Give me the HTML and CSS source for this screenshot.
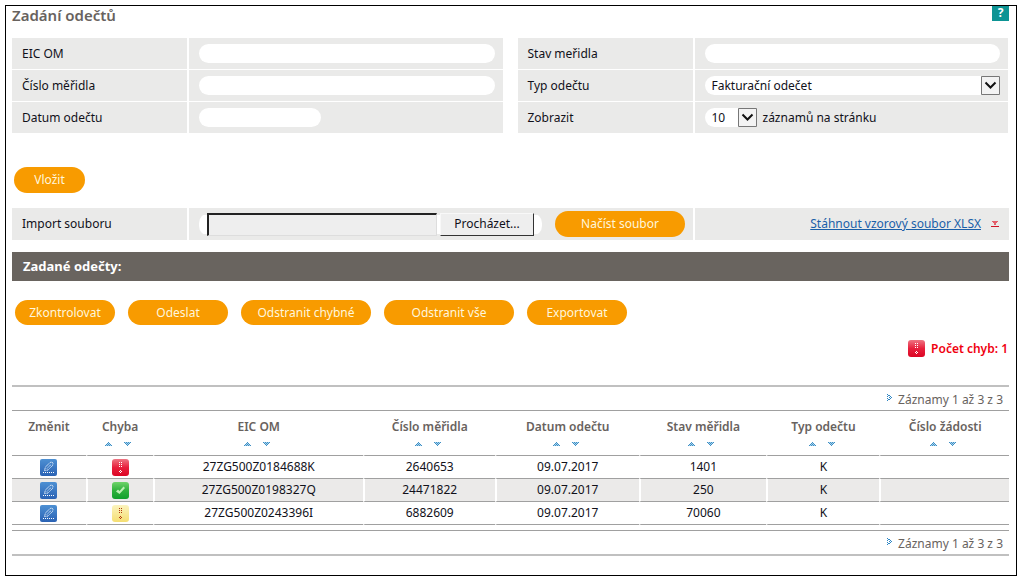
FILE: index.html
```html
<!DOCTYPE html>
<html lang="cs">
<head>
<meta charset="utf-8">
<meta name="viewport" content="width=device-width, initial-scale=1">
<title>Zadání odečtů</title>
<link rel="stylesheet" href="styles.css">
</head>
<body>
<svg class="defs" aria-hidden="true">
  <defs>
    <linearGradient id="g-red" x1="0" y1="0" x2="0" y2="1"><stop offset="0" stop-color="#ee7683"/><stop offset="0.5" stop-color="#e8203c"/><stop offset="1" stop-color="#dc0524"/></linearGradient>
    <linearGradient id="g-green" x1="0" y1="0" x2="0" y2="1"><stop offset="0" stop-color="#6fd36a"/><stop offset="0.5" stop-color="#2fb13c"/><stop offset="1" stop-color="#10a02c"/></linearGradient>
    <linearGradient id="g-yellow" x1="0" y1="0" x2="0" y2="1"><stop offset="0" stop-color="#fbf3bd"/><stop offset="1" stop-color="#f5de72"/></linearGradient>
    <linearGradient id="g-blue" x1="0" y1="0" x2="0" y2="1"><stop offset="0" stop-color="#4d90d3"/><stop offset="1" stop-color="#2a62b4"/></linearGradient>
  </defs>
  <symbol id="dots" viewBox="0 0 17 17"><path d="M7 3h1v1H7zM9 3h1v1H9zM7 5h1v1H7zM9 5h1v1H9zM7 7h1v1H7zM9 7h1v1H9zM8 11h1v1H8zM7 12h1v1H7zM9 12h1v1H9zM8 13h1v1H8z"/></symbol>
  <symbol id="error" viewBox="0 0 17 17"><rect width="17" height="17" rx="3" fill="url(#g-red)"/><use href="#dots" fill="#fff"/></symbol>
  <symbol id="warn" viewBox="0 0 17 17"><rect width="17" height="17" rx="3" fill="url(#g-yellow)"/><use href="#dots" fill="#b03a10"/></symbol>
  <symbol id="ok" viewBox="0 0 17 17"><rect width="17" height="17" rx="3" fill="url(#g-green)"/><path d="M4 9.500 6 7.500l1.500 1.500L11.500 4.500l1.500 1.500L7.500 12z" fill="#bdf0b5"/></symbol>
  <symbol id="edit" viewBox="0 0 17 17"><rect width="17" height="17" rx="2" fill="url(#g-blue)"/><path d="M4.500 11.500 5.500 8 10 3.500 12 3 13 4.500 12.500 6.500 8 11zM7 9.500 11 5.500" fill="none" stroke="#e4effb" stroke-dasharray="1.200 .5"/><path d="M3 13.500h12" stroke="#fff" stroke-dasharray="1 1"/></symbol>
  <symbol id="up" viewBox="0 0 7 4"><path d="M3 0h1v1H3zM2 1h3v1H2zM1 2h5v1H1zM0 3h7v1H0z" fill="#a9d4ee"/><path d="M3 0h1v1H3zM2 1h1v1H2zM4 1h1v1H4zM1 2h1v1H1zM3 2h1v1H3zM5 2h1v1H5zM0 3h1v1H0zM2 3h1v1H2zM4 3h1v1H4zM6 3h1v1H6z" fill="#3f8fc4"/></symbol>
  <symbol id="down" viewBox="0 0 7 4"><g transform="matrix(1 0 0 -1 0 4)"><use href="#up" width="7" height="4"/></g></symbol>
  <symbol id="chev" viewBox="0 0 5 7"><path d="M0 0h1v1H0zM2 1h1v1H2zM0 2h1v1H0zM1 1h1v1H1zM3 2h1v1H3zM2 3h1v1H2zM4 3h1v1H4zM1 5h1v1H1zM3 4h1v1H3zM2 5h1v1H2zM0 4h1v1H0zM0 6h1v1H0z" fill="#2e86c4"/></symbol>
  <symbol id="caret" viewBox="0 0 19 19"><path d="M.5.5h18v18H.5z" fill="#f3f3f3" stroke="#777"/><path d="M4.500 6.500 9.500 11.500 14.500 6.500" fill="none" stroke="#111" stroke-width="2"/></symbol>
</svg>

<main class="frame">
  <header class="top">
    <h1>Zadání odečtů</h1>
    <a class="help" href="#help">?</a>
  </header>

  <form>
    <div class="fields">
      <div class="block">
        <label class="cell" for="eic">EIC OM</label>
        <div class="cell value"><input class="pill" id="eic" type="text"></div>
        <label class="cell" for="cislo">Číslo měřidla</label>
        <div class="cell value"><input class="pill" id="cislo" type="text"></div>
        <label class="cell" for="datum">Datum odečtu</label>
        <div class="cell value"><input class="pill short" id="datum" type="text"></div>
      </div>
      <div class="block">
        <label class="cell" for="stav">Stav meřidla</label>
        <div class="cell value"><input class="pill" id="stav" type="text"></div>
        <label class="cell" for="typ">Typ odečtu</label>
        <div class="cell value"><span class="select wide"><select class="pill" id="typ"><option>Fakturační odečet</option></select><svg class="caret"><use href="#caret"/></svg></span></div>
        <label class="cell" for="pocet">Zobrazit</label>
        <div class="cell value"><span class="select count"><select class="pill" id="pocet"><option>10</option></select><svg class="caret"><use href="#caret"/></svg></span><span>záznamů na stránku</span></div>
      </div>
    </div>

    <button class="btn small insert" type="button">Vložit</button>

    <div class="import">
      <label class="cell" for="soubor">Import souboru</label>
      <div class="cell value">
        <div class="file"><input id="soubor" type="text"><button type="button">Procházet...</button></div>
        <button class="btn large tall" type="button">Načíst soubor</button>
      </div>
      <div class="cell download"><a href="#xlsx">Stáhnout vzorový soubor XLSX</a><svg width="8" height="6" viewBox="0 0 8 6" shape-rendering="crispEdges"><path d="M1 0h6v1H1zM2 1h4v1H2zM3 2h2v1H3zM3 3h2v1H3z" fill="#e3606b"/><path d="M0 5h8v1H0z" fill="#d01526"/></svg></div>
    </div>
  </form>

  <h2>Zadané odečty:</h2>
  <div class="actions">
    <button class="btn" type="button">Zkontrolovat</button>
    <button class="btn" type="button">Odeslat</button>
    <button class="btn large" type="button">Odstranit chybné</button>
    <button class="btn large" type="button">Odstranit vše</button>
    <button class="btn" type="button">Exportovat</button>
  </div>
  <p class="errors"><svg class="icon"><use href="#error"/></svg>Počet chyb: 1</p>

  <div class="pager"><svg class="chev"><use href="#chev"/></svg>Záznamy 1 až 3 z 3</div>
  <table>
    <colgroup><col class="c1"><col class="c2"><col class="c3"><col class="c4"><col class="c5"><col class="c6"><col class="c7"><col class="c8"></colgroup>
    <thead>
      <tr>
        <th>Změnit</th>
        <th>Chyba<span class="sort"><button type="button" aria-label="Vzestupně"><svg><use href="#up"/></svg></button><button type="button" aria-label="Sestupně"><svg><use href="#down"/></svg></button></span></th>
        <th>EIC OM<span class="sort"><button type="button" aria-label="Vzestupně"><svg><use href="#up"/></svg></button><button type="button" aria-label="Sestupně"><svg><use href="#down"/></svg></button></span></th>
        <th>Číslo měřidla<span class="sort"><button type="button" aria-label="Vzestupně"><svg><use href="#up"/></svg></button><button type="button" aria-label="Sestupně"><svg><use href="#down"/></svg></button></span></th>
        <th>Datum odečtu<span class="sort"><button type="button" aria-label="Vzestupně"><svg><use href="#up"/></svg></button><button type="button" aria-label="Sestupně"><svg><use href="#down"/></svg></button></span></th>
        <th>Stav měřidla<span class="sort"><button type="button" aria-label="Vzestupně"><svg><use href="#up"/></svg></button><button type="button" aria-label="Sestupně"><svg><use href="#down"/></svg></button></span></th>
        <th>Typ odečtu<span class="sort"><button type="button" aria-label="Vzestupně"><svg><use href="#up"/></svg></button><button type="button" aria-label="Sestupně"><svg><use href="#down"/></svg></button></span></th>
        <th>Číslo žádosti<span class="sort"><button type="button" aria-label="Vzestupně"><svg><use href="#up"/></svg></button><button type="button" aria-label="Sestupně"><svg><use href="#down"/></svg></button></span></th>
      </tr>
    </thead>
    <tbody>
      <tr><td><button class="edit" type="button" aria-label="Změnit"><svg class="icon"><use href="#edit"/></svg></button></td><td><svg class="icon"><use href="#error"/></svg></td><td>27ZG500Z0184688K</td><td>2640653</td><td>09.07.2017</td><td>1401</td><td>K</td><td></td></tr>
      <tr><td><button class="edit" type="button" aria-label="Změnit"><svg class="icon"><use href="#edit"/></svg></button></td><td><svg class="icon"><use href="#ok"/></svg></td><td>27ZG500Z0198327Q</td><td>24471822</td><td>09.07.2017</td><td>250</td><td>K</td><td></td></tr>
      <tr><td><button class="edit" type="button" aria-label="Změnit"><svg class="icon"><use href="#edit"/></svg></button></td><td><svg class="icon"><use href="#warn"/></svg></td><td>27ZG500Z0243396I</td><td>6882609</td><td>09.07.2017</td><td>70060</td><td>K</td><td></td></tr>
    </tbody>
  </table>
  <div class="pager bottom"><svg class="chev"><use href="#chev"/></svg>Záznamy 1 až 3 z 3</div>
</main>
</body>
</html>
```
FILE: styles.css
```css
* { box-sizing: border-box; }
body {
  margin: 5px 7px 5px 5px;
  background: #fff;
  color: #11111a;
  font: 12px/16px "Noto Sans", "Open Sans", sans-serif;
}
button, input, select { font: inherit; color: inherit; margin: 0; }
svg { display: block; flex: none; }
.defs { position: absolute; width: 0; height: 0; }
.icon { width: 17px; height: 17px; }

.frame { border: 1px solid #000; padding: 0 7px 19px 6px; }
.top { position: relative; height: 32px; }
h1 { margin: 0; font-size: 15px; font-weight: 600; line-height: 18px; color: #68625e; }
.help {
  position: absolute;
  top: -1px;
  right: 0;
  width: 17px;
  height: 16px;
  border-top: 1px solid #000;
  box-shadow: 0 -1px 0 #0d9494;
  background: #0d9494;
  color: #fff;
  font-weight: bold;
  line-height: 14px;
  text-align: center;
  text-decoration: none;
}

.fields { display: grid; grid-template-columns: 1fr 1fr; gap: 15px; margin-right: 1px; }
.block { display: grid; grid-template-columns: 175px 1fr; grid-auto-rows: 31px; gap: 1px 2px; }
.cell { display: flex; align-items: center; background: #eaeae9; padding: 0 10px; }
.value { padding-right: 8px; }
.pill {
  width: 100%;
  height: 19px;
  padding: 0 7px;
  border: 0;
  border-radius: 10px;
  background: #fff;
  appearance: none;
}
.short { width: 122px; }
.select { position: relative; }
.wide { width: 100%; }
.count { width: 52px; margin-right: 6px; }
.caret { position: absolute; top: 0; right: 0; width: 19px; height: 19px; pointer-events: none; }
.select .pill { display: block; border-radius: 10px 0 0 10px; }

.btn {
  width: 100px;
  height: 25px;
  padding: 0;
  border: 0;
  border-radius: 13px;
  background: #f89b00;
  color: #fff6dc;
}
.large { width: 130px; }
.small { width: 71px; }
.tall, .insert { height: 26px; }
.insert { display: block; margin: 34px 2px 15px; }

.import { display: grid; grid-template-columns: 175px 1fr 314px; grid-auto-rows: 32px; column-gap: 2px; margin-right: 1px; }
.import .value { gap: 13px; }
.file { display: flex; gap: 3px; padding: 0 8px; border-radius: 10px; background: linear-gradient(#fff, #fff) center / 100% 19px no-repeat; }
.file input {
  width: 230px;
  height: 23px;
  border: 1px solid #ddd;
  border-top: 2px solid #222;
  border-left: 2px solid #222;
  background: #eee;
}
.file button {
  width: 94px;
  height: 23px;
  padding: 0;
  border: 1px solid #f8f8f8;
  border-right-color: #333;
  border-bottom-color: #333;
  background: #eee;
}
.download { justify-content: flex-end; gap: 10px; }
.download a { color: #1a5fa8; }

h2 {
  margin: 12px 0 19px;
  padding: 0 11px;
  background: #69645f;
  color: #fff;
  font-size: 13px;
  line-height: 29px;
}
.actions { display: flex; gap: 13px; padding: 0 3px; }
.errors {
  display: flex;
  justify-content: flex-end;
  align-items: center;
  gap: 6px;
  margin: 15px 1px 28px;
  color: #f00010;
  font-weight: 600;
}

.pager {
  display: flex;
  justify-content: flex-end;
  gap: 6px;
  height: 26px;
  padding: 5px 6px 0 0;
  border-top: 2px solid #c0c0c0;
  border-bottom: 1px solid #a0a0a0;
  color: #68625e;
}
.pager.bottom { margin-top: 5px; border-top: 1px solid #a0a0a0; border-bottom: 2px solid #c0c0c0; }
.chev { width: 5px; height: 7px; margin-top: 2px; shape-rendering: crispEdges; }

table { width: 100%; table-layout: fixed; border-collapse: separate; border-spacing: 0; }
.c1 { width: 7.4%; }
.c2 { width: 6.7%; }
.c3 { width: 21.1%; }
.c4 { width: 13.2%; }
.c5 { width: 14.5%; }
.c6 { width: 12.7%; }
.c7 { width: 11.4%; }
th, td { padding: 0; border-bottom: 1px solid #a0a0a0; border-left: 2px solid #fff; text-align: center; }
th:first-child, td:first-child { border-left: 0; }
th { height: 45px; padding-top: 8px; vertical-align: top; color: #68625e; font-weight: 600; }
td { height: 23px; }
td .icon { margin: 0 auto; }
tbody tr:nth-child(even) { background: #ebeae9; }
.sort { display: flex; justify-content: center; gap: 12px; padding: 7px 4px 0 0; }
.sort button, .edit { display: block; padding: 0; border: 0; background: none; }
.edit { margin: 0 auto; }
.sort svg { width: 7px; height: 4px; shape-rendering: crispEdges; }
```
